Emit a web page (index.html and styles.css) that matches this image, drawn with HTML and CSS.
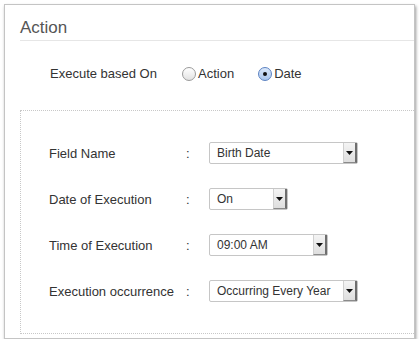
FILE: index.html
```html
<!DOCTYPE html>
<html lang="en">
<head>
    <meta charset="UTF-8">
    <meta name="viewport" content="width=device-width, initial-scale=1.0">
    <title>Action</title>
    <link rel="stylesheet" href="styles.css">
</head>
<body>
    <div class="panel">
        <h2 class="panel-title">Action</h2>

        <div class="based-on">
            <span class="based-on-label">Execute based On</span>
            <label class="radio"><span class="radio-dot"></span>Action</label>
            <label class="radio"><span class="radio-dot checked"></span>Date</label>
        </div>

        <div class="date-box">
            <div class="form-row">
                <span class="form-label">Field Name</span>
                <span class="form-colon">:</span>
                <div class="select select-wide">
                    <span class="select-text">Birth Date</span>
                    <span class="select-arrow"><svg width="7" height="4" viewBox="0 0 7 4"><path d="M0 0h7L3.5 4z" fill="#111"/></svg></span>
                </div>
            </div>
            <div class="form-row">
                <span class="form-label">Date of Execution</span>
                <span class="form-colon">:</span>
                <div class="select select-small">
                    <span class="select-text">On</span>
                    <span class="select-arrow"><svg width="7" height="4" viewBox="0 0 7 4"><path d="M0 0h7L3.5 4z" fill="#111"/></svg></span>
                </div>
            </div>
            <div class="form-row">
                <span class="form-label">Time of Execution</span>
                <span class="form-colon">:</span>
                <div class="select select-mid">
                    <span class="select-text">09:00 AM</span>
                    <span class="select-arrow"><svg width="7" height="4" viewBox="0 0 7 4"><path d="M0 0h7L3.5 4z" fill="#111"/></svg></span>
                </div>
            </div>
            <div class="form-row">
                <span class="form-label">Execution occurrence</span>
                <span class="form-colon">:</span>
                <div class="select select-wide">
                    <span class="select-text">Occurring Every Year</span>
                    <span class="select-arrow"><svg width="7" height="4" viewBox="0 0 7 4"><path d="M0 0h7L3.5 4z" fill="#111"/></svg></span>
                </div>
            </div>
        </div>
    </div>
</body>
</html>
```

FILE: styles.css
```css
body {
    margin: 0;
    background: #fff;
    font-family: "Liberation Sans", Arial, sans-serif;
    font-size: 13px;
    color: #333;
}
.panel {
    margin: 4px 0 0 4px;
    width: 409px;
    padding-bottom: 4px;
    border: 1px solid #c4c4c4;
    box-shadow: 1px 2px 3px rgba(0,0,0,0.4);
    overflow: hidden;
}
.panel-title {
    margin: 0 0 0 15px;
    padding-top: 13px;
    height: 22px;
    font-size: 17px;
    font-weight: normal;
    line-height: 20px;
    color: #555;
    border-bottom: 1px solid #e6e6e6;
}
.based-on {
    display: flex;
    align-items: center;
    margin-top: 23px;
    padding-left: 45px;
    line-height: 20px;
}
.based-on-label {
    width: 132px;
}
.radio {
    display: flex;
    align-items: center;
}
.radio + .radio {
    margin-left: 24px;
}
.radio-dot {
    box-sizing: border-box;
    width: 14px;
    height: 14px;
    margin-right: 2px;
    border: 1px solid #9a9a9a;
    border-radius: 50%;
    background: linear-gradient(#fff, #e2e2e2);
    position: relative;
}
.radio-dot.checked {
    border-color: #5b82c2;
    background: linear-gradient(#dbe8fa, #a9c6ee);
}
.radio-dot.checked::after {
    content: "";
    position: absolute;
    left: 4px;
    top: 4px;
    width: 4px;
    height: 4px;
    border-radius: 50%;
    background: #111;
}
.date-box {
    margin: 26px 0 0 15px;
    padding: 31px 0 31px 28px;
    border: 1px dotted #c8c8c8;
    border-right: none;
    display: flex;
    flex-direction: column;
    gap: 24px;
}
.form-row {
    display: flex;
    align-items: center;
    height: 22px;
}
.form-label {
    width: 137px;
}
.form-colon {
    width: 23px;
}
.select {
    box-sizing: border-box;
    display: flex;
    align-items: center;
    height: 22px;
    border: 1px solid #c6c6c6;
    border-radius: 2px;
    background: #fff;
    font-size: 12px;
}
.select-wide {
    width: 149px;
}
.select-mid {
    width: 119px;
}
.select-small {
    width: 79px;
}
.select-text {
    flex: 1;
    padding-left: 7px;
}
.select-arrow {
    box-sizing: border-box;
    width: 14px;
    height: 20px;
    display: flex;
    align-items: center;
    justify-content: center;
    background: linear-gradient(#f4f4f4, #dedede);
    border-left: 1px solid #d0d0d0;
    border-right: 2px solid #6e6e6e;
    border-bottom: 1px solid #8a8a8a;
}
```
